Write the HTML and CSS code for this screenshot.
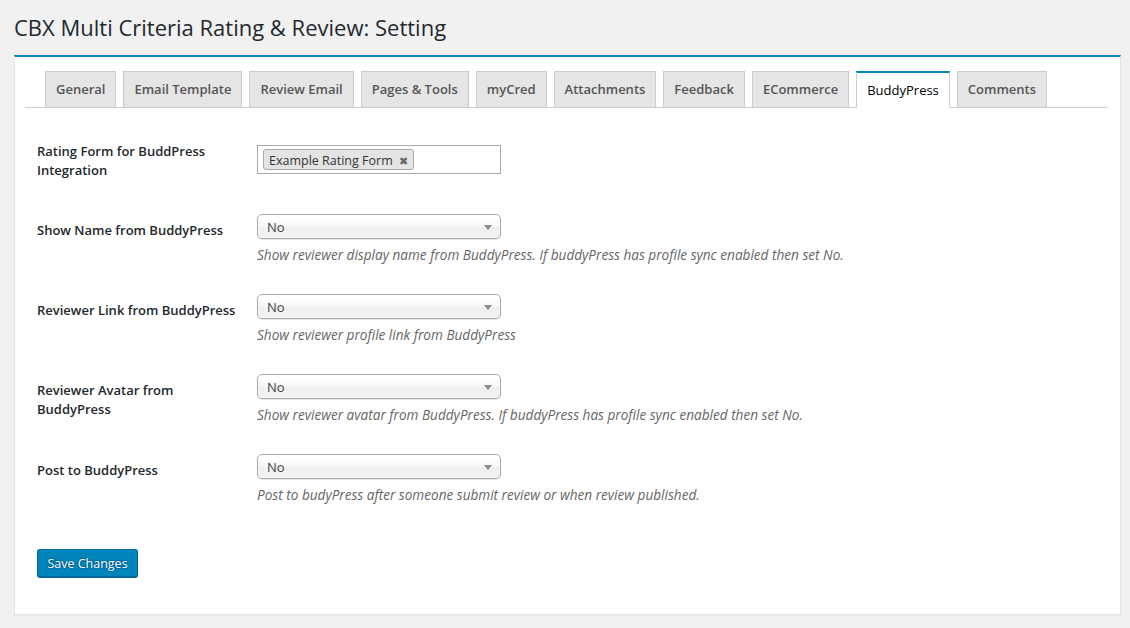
FILE: index.html
```html
<!DOCTYPE html>
<html>
<head>
<meta charset="utf-8">
<link rel="stylesheet" href="styles.css">
</head>
<body>
<div class="wrap">
  <h1 class="page-title">CBX Multi Criteria Rating &amp; Review: Setting</h1>
  <div class="panel">
    <nav class="tabs">
      <span class="tab">General</span>
      <span class="tab">Email Template</span>
      <span class="tab">Review Email</span>
      <span class="tab">Pages &amp; Tools</span>
      <span class="tab">myCred</span>
      <span class="tab">Attachments</span>
      <span class="tab">Feedback</span>
      <span class="tab">ECommerce</span>
      <span class="tab tab-active">BuddyPress</span>
      <span class="tab">Comments</span>
    </nav>
    <form class="form">
      <div class="row row-first">
        <div class="label">Rating Form for BuddPress Integration</div>
        <div class="field">
          <div class="multi">
            <span class="chip">Example Rating Form <span class="chip-x">✖</span></span>
          </div>
        </div>
      </div>
      <div class="row">
        <div class="label">Show Name from BuddyPress</div>
        <div class="field">
          <div class="select"><span>No</span><span class="arrow"></span></div>
          <p class="desc">Show reviewer display name from BuddyPress. If buddyPress has profile sync enabled then set No.</p>
        </div>
      </div>
      <div class="row">
        <div class="label">Reviewer Link from BuddyPress</div>
        <div class="field">
          <div class="select"><span>No</span><span class="arrow"></span></div>
          <p class="desc">Show reviewer profile link from BuddyPress</p>
        </div>
      </div>
      <div class="row">
        <div class="label">Reviewer Avatar from BuddyPress</div>
        <div class="field">
          <div class="select"><span>No</span><span class="arrow"></span></div>
          <p class="desc">Show reviewer avatar from BuddyPress. If buddyPress has profile sync enabled then set No.</p>
        </div>
      </div>
      <div class="row">
        <div class="label">Post to BuddyPress</div>
        <div class="field">
          <div class="select"><span>No</span><span class="arrow"></span></div>
          <p class="desc">Post to budyPress after someone submit review or when review published.</p>
        </div>
      </div>
      <div class="submit">
        <button type="button" class="btn-primary">Save Changes</button>
      </div>
    </form>
  </div>
</div>
</body>
</html>
```
FILE: styles.css
```css
* { box-sizing: border-box; }
html, body { margin: 0; padding: 0; }
body {
  background: #f1f1f1;
  font-family: "Open Sans", "Noto Sans", sans-serif;
  color: #23282d;
  font-size: 13px;
  width: 1130px;
  height: 628px;
  overflow: hidden;
}
.wrap {
  padding: 0 9px 0 14px;
}
.page-title {
  margin: 0;
  padding: 13px 0 0;
  height: 55px;
  font-size: 22px;
  font-weight: 400;
  line-height: 29px;
  color: #23282d;
}
.panel {
  background: #fff;
  border: 1px solid #e5e5e5;
  border-top: 2px solid #0085ba;
  box-shadow: 0 1px 1px rgba(0,0,0,.04);
  padding: 14px 12px 36px 10px;
  height: 560px;
}
.tabs {
  display: flex;
  align-items: flex-end;
  border-bottom: 1px solid #ccc;
  padding-left: 20px;
  height: 37px;
}
.tab {
  display: block;
  height: 37px;
  margin-right: 7px;
  margin-bottom: -1px;
  padding: 0 10px;
  background: #e5e5e5;
  border: 1px solid #ccc;
  color: #555;
  font-size: 13px;
  font-weight: 600;
  line-height: 34px;
  white-space: nowrap;
}
.tab-active {
  background: #fff;
  color: #000;
  border-top: 2px solid #0085ba;
  border-bottom: 1px solid #fff;
  line-height: 35px;
  font-weight: 500;
}
.form {
  padding: 13px 0 0 12px;
}
.row {
  display: grid;
  grid-template-columns: 220px 1fr;
  height: 80px;
}
.row-first { height: 78px; }
.label {
  padding-top: 22px;
  width: 200px;
  font-size: 13px;
  font-weight: 600;
  line-height: 19px;
  color: #23282d;
}
.row-first .label { padding-top: 21px; }
.field { padding-top: 15px; }
.row-first .field { padding-top: 24px; }
.multi {
  width: 244px;
  height: 29px;
  border: 1px solid #aaa;
  background: #fff;
  padding: 3px 5px;
}
.chip {
  display: inline-flex;
  align-items: center;
  height: 21px;
  padding: 1px 5px 0 5px;
  background: #e4e4e4;
  border: 1px solid #aaa;
  border-radius: 3px;
  font-size: 12.5px;
  color: #333;
  line-height: 19px;
}
.chip-x {
  margin-left: 6px;
  font-size: 11px;
  color: #666;
}
.select {
  position: relative;
  width: 244px;
  height: 25px;
  border: 1px solid #aaa;
  border-radius: 5px;
  background: linear-gradient(#fff 20%, #f6f6f6 50%, #eee 52%, #f4f4f4 100%);
  box-shadow: 0 0 3px #fff inset, 0 1px 1px rgba(0,0,0,.1);
  padding: 1px 9px 0;
  font-size: 13px;
  line-height: 23px;
  color: #444;
}
.arrow {
  position: absolute;
  right: 8px;
  top: 10px;
  width: 0;
  height: 0;
  border-left: 4px solid transparent;
  border-right: 4px solid transparent;
  border-top: 5px solid #888;
}
.desc {
  margin: 6px 0 0;
  font-size: 13.6px;
  font-style: italic;
  line-height: 19px;
  color: #666;
  white-space: nowrap;
}
.submit {
  padding-top: 30px;
}
.btn-primary {
  display: block;
  width: 101px;
  height: 28px;
  padding: 1px 8px 0;
  background: #0085ba;
  border: 1px solid #0073aa;
  border-color: #0073aa #006799 #006799;
  border-radius: 3px;
  box-shadow: 0 1px 0 #006799;
  color: #fff;
  font-family: "Open Sans", "Noto Sans", sans-serif;
  font-size: 12.5px;
  line-height: 25px;
  text-shadow: 0 -1px 1px #006799, 1px 0 1px #006799, 0 1px 1px #006799, -1px 0 1px #006799;
  white-space: nowrap;
}
```
